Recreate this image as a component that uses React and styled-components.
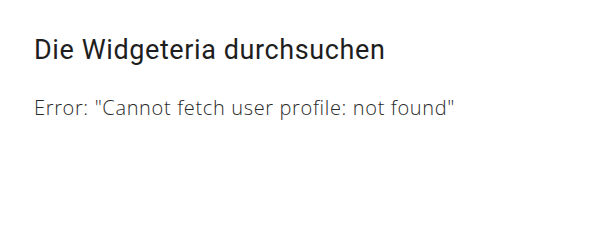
import React from 'react';
import styled, { createGlobalStyle } from 'styled-components';

const GlobalStyle = createGlobalStyle`
	body {
		margin: 0;
		background: #ffffff;
	}
`;

const Page = styled.div`
	display: flex;
	flex-direction: column;
	padding: 34px 34px;
`;

const Title = styled.h1`
	margin: 0;
	font-family: Roboto, "Liberation Sans", sans-serif;
	font-size: 27px;
	font-weight: 400;
	color: #1e1e1e;
	line-height: 32px;
	letter-spacing: 0.6px;
`;

const ErrorText = styled.p`
	margin: 29px 0 0;
	font-family: "Open Sans", "Noto Sans", sans-serif;
	font-size: 20px;
	font-weight: 300;
	color: #2a2a2a;
	line-height: 26px;
	letter-spacing: 0.65px;
`;

const App = () => {
	return (
		<Page>
			<GlobalStyle />
			<Title>Die Widgeteria durchsuchen</Title>
			<ErrorText>Error: "Cannot fetch user profile: not found"</ErrorText>
		</Page>
	);
};

export default App;
